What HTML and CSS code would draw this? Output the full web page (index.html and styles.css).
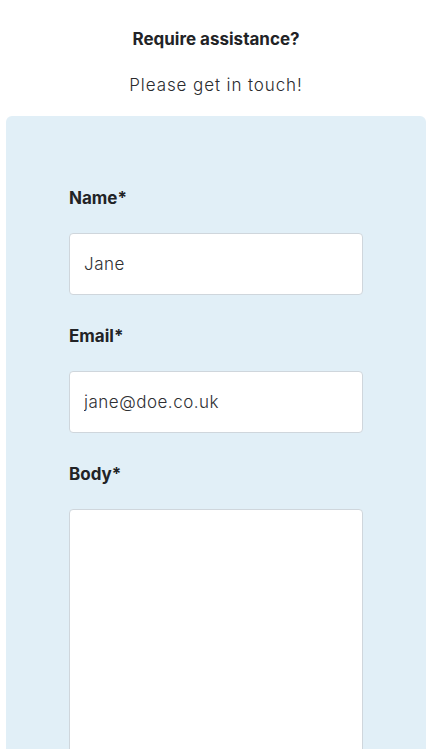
FILE: index.html
```html
<!DOCTYPE html>
<html lang="en">
<head>
<meta charset="utf-8">
<title>Contact</title>
<link rel="stylesheet" href="styles.css">
</head>
<body>
<div class="page">
  <h1 class="title">Require assistance?</h1>
  <p class="subtitle">Please get in touch!</p>
  <form class="panel">
    <div class="field">
      <label class="label" for="name">Name*</label>
      <input class="input" id="name" type="text" value="Jane">
    </div>
    <div class="field">
      <label class="label" for="email">Email*</label>
      <input class="input" id="email" type="email" value="jane@doe.co.uk">
    </div>
    <div class="field">
      <label class="label" for="body">Body*</label>
      <textarea class="input textarea" id="body"></textarea>
    </div>
  </form>
</div>
</body>
</html>
```
FILE: styles.css
```css
html, body {
  margin: 0;
  padding: 0;
  background: #ffffff;
}
body {
  font-family: "Inter", "Open Sans", sans-serif;
  color: #222326;
}
.page {
  padding: 28px 10px 0 6px;
}
.title {
  margin: 0;
  font-size: 17px;
  line-height: 22px;
  font-weight: 700;
  text-align: center;
}
.subtitle {
  margin: 24px 0 0;
  font-size: 17px;
  line-height: 22px;
  font-weight: 300;
  letter-spacing: 0.9px;
  text-align: center;
  color: #2a2b2e;
}
.panel {
  margin-top: 20px;
  background: #e1eff7;
  border-radius: 6px;
  padding: 71px 63px 40px;
  display: flex;
  flex-direction: column;
  gap: 30px;
}
.field {
  display: flex;
  flex-direction: column;
  gap: 24px;
}
.label {
  font-size: 17px;
  line-height: 22px;
  font-weight: 700;
}
.input {
  box-sizing: border-box;
  width: 100%;
  height: 62px;
  margin: 0;
  padding: 0 14px;
  border: 1px solid #cfd6dc;
  border-radius: 4px;
  background: #ffffff;
  font-family: inherit;
  font-size: 17px;
  font-weight: 300;
  letter-spacing: 0.5px;
  color: #2e2f33;
  outline: none;
}
.textarea {
  height: 320px;
  resize: none;
  padding: 14px;
}
```
